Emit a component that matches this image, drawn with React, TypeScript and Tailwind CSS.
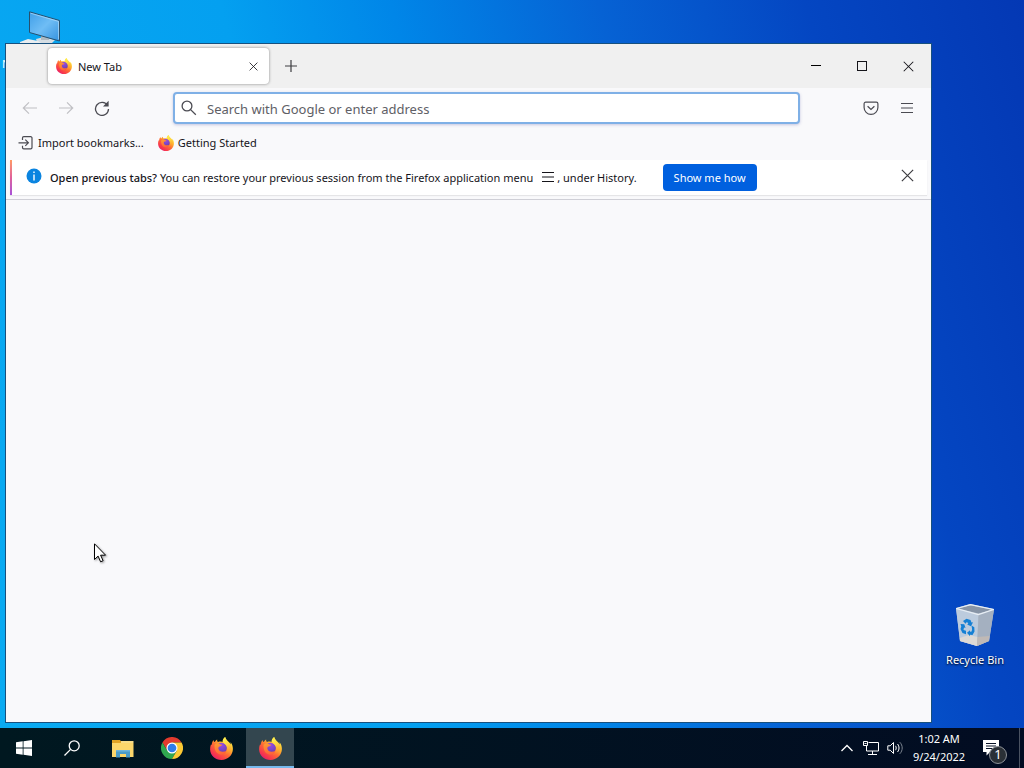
import { useId, useState, type ReactNode } from 'react';

function FirefoxLogo({ className }: { className?: string }) {
  const id = useId();

  return (
    <svg viewBox="0 0 24 24" className={className} aria-hidden="true">
      <defs>
        <linearGradient id={`${id}body`} x1="0.85" y1="0.1" x2="0.2" y2="0.95">
          <stop offset="0" stopColor="#fff04a" />
          <stop offset="0.3" stopColor="#ffb52e" />
          <stop offset="0.55" stopColor="#ff6a35" />
          <stop offset="0.85" stopColor="#f8354d" />
          <stop offset="1" stopColor="#e2206e" />
        </linearGradient>
        <linearGradient id={`${id}tail`} x1="0.3" y1="0" x2="0.6" y2="1">
          <stop offset="0" stopColor="#fff44f" />
          <stop offset="0.45" stopColor="#ffd23e" />
          <stop offset="1" stopColor="#ff8a2a" stopOpacity="0" />
        </linearGradient>
        <linearGradient id={`${id}snout`} x1="0.3" y1="0" x2="0.6" y2="1">
          <stop offset="0" stopColor="#ff9a32" />
          <stop offset="1" stopColor="#ff6238" />
        </linearGradient>
        <radialGradient id={`${id}orb`} cx="0.5" cy="0.2" r="0.8">
          <stop offset="0" stopColor="#9a4be0" />
          <stop offset="0.6" stopColor="#7a45c8" />
          <stop offset="1" stopColor="#6a3aa8" />
        </radialGradient>
      </defs>
      <path
        fill={`url(#${id}body)`}
        d="M15.800 0c-1.800 1.400-2.800 3.200-2.800 5.200-1.700-.7-3.200-.6-4.600-.1-.9-.6-1.100-1.500-.9-2.600C6.300 3.100 5.400 4.200 4.900 5.300c-.8-.3-1.100-1.200-1.100-2.200C2.500 4.500 1.900 6.400 1.800 8L.9 8.200C.3 9.700.1 11.300.1 13 .4 19.200 5.400 24 12 24s11.800-5 11.900-11.400c0-3-1-5.500-2.500-7 .1.800.2 1.500.1 2.100C20.200 4.700 16.500 3.600 15.800 0z"
      />
      <circle cx="12" cy="11.500" r="5.600" fill={`url(#${id}orb)`} />
      <path
        fill={`url(#${id}snout)`}
        d="M4.800 8.200c1.600-1.600 3.600-1.800 5-1 .9.500 1.700.7 2.800.9-.2 1-1.300 1.500-2.400 1.800-1.300.4-1.700 1.300-1.400 2.400.5 2.200 2.600 3.400 4.800 3.100 1.500-.2 2.400-.5 3.200-.8-.9 2.500-3 3.900-5.500 3.800-4.500-.3-7-4.800-6.500-10.200z"
      />
      <path
        fill={`url(#${id}tail)`}
        d="M15.800 0c-2.200 1.800-3 4.200-1.700 6 1.300 1.700 3.300 2.500 3.800 5 .7 3.200-1 6.300-3.600 7.800 4.800-.2 8.300-3.500 7.700-8.500C21.500 5.800 16.600 4 15.800 0z"
      />
    </svg>
  );
}

function ChromeLogo() {
  return (
    <svg viewBox="0 0 48 48" className="size-[22px]" aria-hidden="true">
      <path fill="#e33b2e" d="M24 12H44.800A24 24 0 0 0 3.200 12L13.600 30z" />
      <path fill="#2fa84f" d="M13.600 30 3.200 12A24 24 0 0 0 24 48L34.400 30z" />
      <path fill="#fcc934" d="M34.400 30 24 48A24 24 0 0 0 44.800 12H24z" />
      <circle cx="24" cy="24" r="12" fill="#fff" />
      <circle cx="24" cy="24" r="9.500" fill="#2f7de9" />
    </svg>
  );
}

function FolderIcon() {
  return (
    <svg viewBox="0 0 22 19" className="h-[19px] w-[22px]" aria-hidden="true">
      <path fill="#e0a326" d="M0 1h8l1.500 2H21v5H0z" />
      <path fill="#fbd66b" d="M0 4h21.500v14H0z" />
      <path fill="#f7dc88" d="M9 2h12.500v2H9z" />
      <path fill="#4a9bc8" d="M4 11h14v7.500h-4V15H8v3.500H4z" />
      <path fill="#6db4dc" d="M4 11h14v1.500H4z" />
    </svg>
  );
}

function MonitorIcon() {
  return (
    <svg viewBox="0 0 42 36" className="h-9 w-[42px]" aria-hidden="true">
      <defs>
        <linearGradient id="monitor-screen" x1="0" y1="0" x2="1" y2="1">
          <stop offset="0" stopColor="#3f9fe8" />
          <stop offset="0.5" stopColor="#6fbdf5" />
          <stop offset="1" stopColor="#3492df" />
        </linearGradient>
      </defs>
      <path fill="#d5dde3" d="m17 28 8-2 11 3-4 4-13 1z" />
      <path fill="#aeb9c2" d="M22 24h8v5h-8z" />
      <path fill="#e9edf0" d="m1 31 8-3 10 2 5 3v3H1z" />
      <path
        fill="url(#monitor-screen)"
        stroke="#27506e"
        strokeWidth="1"
        d="m10.500.800 30 8.700V30l-30-8.500z"
      />
      <path fill="none" stroke="#c4e4fa" strokeWidth="0.600" d="m11.500 2.200 28 8.200v18" />
    </svg>
  );
}

function RecycleBinIcon() {
  return (
    <svg viewBox="0 0 38 42" className="h-[42px] w-[38px]" aria-hidden="true">
      <path fill="#b7c3d1" d="M0 4 14 0l24 5-5 32-12 5-17-5z" />
      <path fill="#8794a6" d="m1.500 4.500 13-3.300 22 4.500-14 3.800z" />
      <path fill="#bccbdd" d="m0 4.500 22.500 6L21 42 4 37z" />
      <path fill="#a4b0c0" d="m22.500 10.500 15.500-5L33 37l-12 5z" />
      <path fill="#ddd9d5" d="m3.800 34 9-3 8.700 2L21 42 4 37z" />
      <path fill="#bfb9b6" d="m21.500 33 12-1-.5 5-12 5z" />
      <path fill="none" stroke="#e8eef5" strokeWidth="1.200" d="m.6 4.500 14-3.800L37.400 5.500l-15 5z" />
      <g fill="#1580d4">
        <path d="m7 17 3.500-2.200 4 1.200 1 2.600 1.500-.3-2 4-4-1.700 1.300-.7-1.300-2.100-1.500 2z" />
        <path d="m4.500 20 3.800.3 1.200 3.700-1.500-.5-.5 2.500 2.500.7v3.500l-3.500-1.100-2-4.100.8-2.400z" />
        <path d="m15.500 21.500 2.800 1.800.2 4.200-2 3.500-2.500-.2v1.500l-3-3.600 3-2.400v1.400l1.600-.2.500-2.200z" />
      </g>
    </svg>
  );
}

function MenuIcon({ className }: { className?: string }) {
  return (
    <svg viewBox="0 0 14 12" className={className} aria-hidden="true">
      <path d="M1 1.500h12M1 6h12M1 10.500h12" fill="none" stroke="currentColor" strokeWidth="1.200" />
    </svg>
  );
}

function CloseIcon({ className }: { className?: string }) {
  return (
    <svg viewBox="0 0 12 12" className={className} aria-hidden="true">
      <path d="m.8.800 10.400 10.400M11.200.800.800 11.200" fill="none" stroke="currentColor" strokeWidth="1.100" />
    </svg>
  );
}

function ToolbarButton({
  label,
  disabled,
  children,
}: {
  label: string;
  disabled?: boolean;
  children: ReactNode;
}) {
  return (
    <button
      aria-label={label}
      disabled={disabled}
      className="flex h-8 w-9 shrink-0 items-center justify-center text-[#4b4b52] disabled:text-[#c0c0c4]"
    >
      {children}
    </button>
  );
}

function TabStrip() {
  return (
    <div className="flex h-11 items-center bg-[#f0f0f0] pl-[42px]">
      <div className="flex h-9 w-[221px] items-center rounded-sm bg-white px-2 shadow-[0_0_3px_rgba(0,0,0,0.45)]">
        <FirefoxLogo className="size-4" />
        <span className="ml-1.5 flex-1 pt-0.5 text-[11px]">New Tab</span>
        <button aria-label="Close tab" className="flex size-4 items-center justify-center">
          <CloseIcon className="size-[9px]" />
        </button>
      </div>
      <button aria-label="Open a new tab" className="ml-1 flex h-9 w-9 items-center justify-center text-[#3c3c40]">
        <svg viewBox="0 0 12 12" className="size-3" aria-hidden="true">
          <path d="M6 0v12M0 6h12" stroke="currentColor" strokeWidth="1.200" />
        </svg>
      </button>
      <div className="ml-auto flex h-full">
        <button aria-label="Minimize" className="flex w-[46px] items-center justify-center">
          <svg viewBox="0 0 10 10" className="size-2.5" shapeRendering="crispEdges" aria-hidden="true">
            <path d="M0 4h10v1H0z" />
          </svg>
        </button>
        <button aria-label="Maximize" className="flex w-[46px] items-center justify-center">
          <svg viewBox="0 0 10 10" className="size-2.5" shapeRendering="crispEdges" aria-hidden="true">
            <path d="M.5.500h9v9h-9z" fill="none" stroke="currentColor" />
          </svg>
        </button>
        <button aria-label="Close" className="flex w-[46px] items-center justify-center">
          <CloseIcon className="size-[11px]" />
        </button>
      </div>
    </div>
  );
}

function NavBar() {
  const [query, setQuery] = useState('');

  return (
    <div className="flex h-10 items-center px-1.5">
      <ToolbarButton label="Back" disabled>
        <svg viewBox="0 0 16 16" className="size-4" fill="none" stroke="currentColor" strokeWidth="1.200" aria-hidden="true">
          <path d="M15 8H1.500M7 2.300 1.300 8 7 13.700" />
        </svg>
      </ToolbarButton>
      <ToolbarButton label="Forward" disabled>
        <svg viewBox="0 0 16 16" className="size-4" fill="none" stroke="currentColor" strokeWidth="1.200" aria-hidden="true">
          <path d="M1 8h13.500M9 2.300 14.700 8 9 13.700" />
        </svg>
      </ToolbarButton>
      <ToolbarButton label="Reload">
        <svg viewBox="0 0 16 16" className="size-4" fill="none" stroke="currentColor" strokeWidth="1.300" aria-hidden="true">
          <path d="M13.600 5.600A6.500 6.500 0 1 0 14.500 9" />
          <path d="M14.600.800v5.700H9z" fill="currentColor" stroke="none" />
        </svg>
      </ToolbarButton>

      <label className="mx-[53px] flex h-8 flex-1 items-center rounded-sm border-2 border-[#7fb0e6] bg-white pl-1.5 shadow-[0_1px_3px_rgba(80,80,160,0.3)]">
        <svg viewBox="0 0 16 16" className="size-4 text-[#4b4b52]" fill="none" stroke="currentColor" strokeWidth="1.300" aria-hidden="true">
          <circle cx="6" cy="6" r="4.900" />
          <path d="m9.600 9.600 5.200 5.200" />
        </svg>
        <input
          type="text"
          aria-label="Address"
          value={query}
          onChange={(e) => setQuery(e.target.value)}
          placeholder="Search with Google or enter address"
          className="ml-2.5 h-full min-w-0 flex-1 bg-transparent pt-0.5 text-[13px] outline-none placeholder:text-[#606066]"
        />
      </label>

      <ToolbarButton label="Save to Pocket">
        <svg viewBox="0 0 16 16" className="size-4" fill="none" stroke="currentColor" strokeWidth="1.200" aria-hidden="true">
          <path d="M2.700 2.200h10.600a1.600 1.600 0 0 1 1.600 1.600V7.500a6.900 6.900 0 0 1-13.800 0V3.800a1.600 1.600 0 0 1 1.600-1.600z" />
          <path d="M4.600 6.200 8 9.500l3.400-3.300" />
        </svg>
      </ToolbarButton>
      <ToolbarButton label="Open application menu">
        <MenuIcon className="h-3 w-3.5" />
      </ToolbarButton>
    </div>
  );
}

function BookmarksBar() {
  return (
    <div className="flex h-8 items-start gap-3.5 pt-1.5 pl-3 text-[11px]">
      <a href="#import" className="flex h-[18px] items-center gap-1">
        <svg viewBox="0 0 16 16" className="size-4 text-[#4b4b52]" fill="none" stroke="currentColor" strokeWidth="1.200" aria-hidden="true">
          <path d="M4.500 5V3a1.300 1.300 0 0 1 1.300-1.300h6.900A1.300 1.300 0 0 1 14 3v9.500a1.300 1.300 0 0 1-1.300 1.300H5.800a1.300 1.300 0 0 1-1.300-1.300v-1.700" />
          <path d="M.5 7.800h9.500M7.300 4.700l3.100 3.100-3.100 3.100" />
        </svg>
        Import bookmarks...
      </a>
      <a href="#getting-started" className="flex h-[18px] items-center gap-1">
        <FirefoxLogo className="size-4" />
        Getting Started
      </a>
    </div>
  );
}

function RestoreNotice() {
  return (
    <div className="border-b border-[#cfcfd6] px-1 pb-1">
      <div className="flex h-[35px] items-center bg-white shadow-[0_1px_1px_rgba(0,0,0,0.08)]">
        <div className="h-full w-0.5 bg-linear-to-b from-[#ff9a62] via-[#e0609a] to-[#a850d8]" />
        <svg viewBox="0 0 16 16" className="mb-1 ml-3.5 size-4" aria-hidden="true">
          <circle cx="8" cy="8" r="7.500" fill="#0a84e0" />
          <path d="M7.300 3.500h1.400V5H7.300zM7.300 6.500h1.400v6H7.300z" fill="#fff" />
        </svg>
        <p className="ml-2 flex items-center pt-0.5 text-[11px] whitespace-pre">
          <span className="font-medium">Open previous tabs? </span>
          You can restore your previous session from the Firefox application menu
          <MenuIcon className="mr-0.5 mb-1 ml-2 h-3 w-3.5" />, under History.
        </p>
        <button className="ml-[26px] h-[27px] rounded-sm bg-[#0060df] px-[11px] pt-0.5 text-[11px] text-white">
          Show me how
        </button>
        <button aria-label="Dismiss" className="mr-3 mb-1 ml-auto flex size-4 items-center justify-center text-[#3c3c40]">
          <CloseIcon className="size-[13px]" />
        </button>
      </div>
    </div>
  );
}

function TaskButton({ label, active, children }: { label: string; active?: boolean; children: ReactNode }) {
  return (
    <button
      aria-label={label}
      className={`flex h-full w-12 items-center justify-center ${
        active ? 'border-t-2 border-b-2 border-t-[#33464f] border-b-[#76b9ed] bg-[#33464f]' : ''
      }`}
    >
      {children}
    </button>
  );
}

function Taskbar() {
  return (
    <footer className="flex h-10 shrink-0 items-center bg-linear-to-r from-[#001820] to-[#020c22] text-white">
      <div className="flex h-full">
        <TaskButton label="Start">
          <svg viewBox="0 0 16 16" className="size-4" fill="#fff" aria-hidden="true">
            <path d="M0 2.200 6.700 1.300v6.300H0zM7.500 1.200 16 0v7.600H7.500zM0 8.400h6.700v6.300L0 13.800zM7.500 8.400H16V16l-8.500-1.200z" />
          </svg>
        </TaskButton>
        <TaskButton label="Search">
          <svg viewBox="0 0 16 16" className="size-4" fill="none" stroke="#fff" strokeWidth="1.300" aria-hidden="true">
            <circle cx="10.200" cy="5.800" r="5" />
            <path d="M6.600 9.400.5 15.500" />
          </svg>
        </TaskButton>
      </div>
      <div className="ml-[3px] flex h-full gap-px">
        <TaskButton label="File Explorer">
          <FolderIcon />
        </TaskButton>
        <TaskButton label="Google Chrome">
          <ChromeLogo />
        </TaskButton>
        <TaskButton label="Firefox">
          <FirefoxLogo className="size-[23px]" />
        </TaskButton>
        <TaskButton label="New Tab - Mozilla Firefox" active>
          <FirefoxLogo className="size-[23px]" />
        </TaskButton>
      </div>

      <div className="ml-auto flex h-full items-center">
        <button aria-label="Show hidden icons" className="flex w-6 justify-center">
          <svg viewBox="0 0 12 8" className="h-2 w-3" fill="none" stroke="#fff" strokeWidth="1.300" aria-hidden="true">
            <path d="m.5 7 5.500-5.500L11.500 7" />
          </svg>
        </button>
        <button aria-label="Network" className="flex w-6 justify-center">
          <svg viewBox="0 0 16 14" className="h-3.5 w-4" fill="none" stroke="#fff" aria-hidden="true">
            <path d="M5.500 1.500h10v8.500H3.500V5M9.500 10v3M5 13.500h9" />
            <path d="M.5.500h4v4h-4zM1.500 2.500h2" />
          </svg>
        </button>
        <button aria-label="Volume" className="flex w-6 justify-center">
          <svg viewBox="0 0 16 14" className="h-3.5 w-4" fill="none" stroke="#fff" aria-hidden="true">
            <path d="M.8 4.800h2.400l3.300-3.300v11L3.200 9.200H.8z" />
            <path d="M8.500 4.800c.9 1.300.9 3.100 0 4.400M10.500 3c2 2.300 2 5.700 0 8" />
            <path d="M12.800 1.200c3.200 3.300 3.200 8.300 0 11.600" stroke="#7d8590" />
          </svg>
        </button>
        <button className="w-16 text-center text-[11px] leading-[18px]">
          1:02 AM
          <br />
          9/24/2022
        </button>
        <button aria-label="1 new notification" className="flex w-12 pl-3">
          <span className="relative block">
            <svg viewBox="0 0 16 16" className="size-4" aria-hidden="true">
              <path d="M0 0h16v12H7l-3.500 3.500V12H0z" fill="#fff" />
              <path d="M3 3.500h10M3 6h10M3 8.500h7" stroke="#0a1428" />
            </svg>
            <span className="absolute top-1.5 left-1.5 flex size-[18px] items-center justify-center rounded-full border border-[#8d9298] bg-[#2a3036] text-[13px]">
              1
            </span>
          </span>
        </button>
        <button aria-label="Show desktop" className="h-full w-[5px] border-l border-[#4a5261]" />
      </div>
    </footer>
  );
}

export default function App() {
  return (
    <div className="flex min-h-screen flex-col overflow-hidden font-['Noto_Sans','Open_Sans',sans-serif] text-[#15141a]">
      <main className="relative flex-1 bg-[linear-gradient(75deg,#0aabf2_0%,#04a0f0_34%,#0086e8_48%,#0662d4_65%,#0446c2_82%,#0438b4_100%)]">
        <div className="absolute top-[11px] left-[19px]">
          <MonitorIcon />
        </div>
        <span className="absolute top-14 left-0.5 text-[11px] text-white">N</span>

        <div className="absolute top-[604px] left-[940px] flex w-[70px] flex-col items-center gap-1.5 text-[11px] text-white">
          <RecycleBinIcon />
          <span className="whitespace-nowrap [text-shadow:0_1px_2px_#000]">Recycle Bin</span>
        </div>

        <section
          aria-label="Mozilla Firefox"
          className="absolute top-[43px] right-[92px] bottom-[5px] left-[5px] flex flex-col border border-[#17507e] bg-[#f9f9fb]"
        >
          <TabStrip />
          <NavBar />
          <BookmarksBar />
          <RestoreNotice />
        </section>

        <svg viewBox="0 0 13 21" className="absolute top-[543px] left-[94px] h-[21px] w-[13px] drop-shadow-[1px_1px_1px_rgba(0,0,0,0.4)]" aria-hidden="true">
          <path d="M.5.800v15.700l3.600-3.400 2.500 5.700 2.500-1.100-2.500-5.500h5z" fill="#fff" stroke="#000" />
        </svg>
      </main>
      <Taskbar />
    </div>
  );
}
